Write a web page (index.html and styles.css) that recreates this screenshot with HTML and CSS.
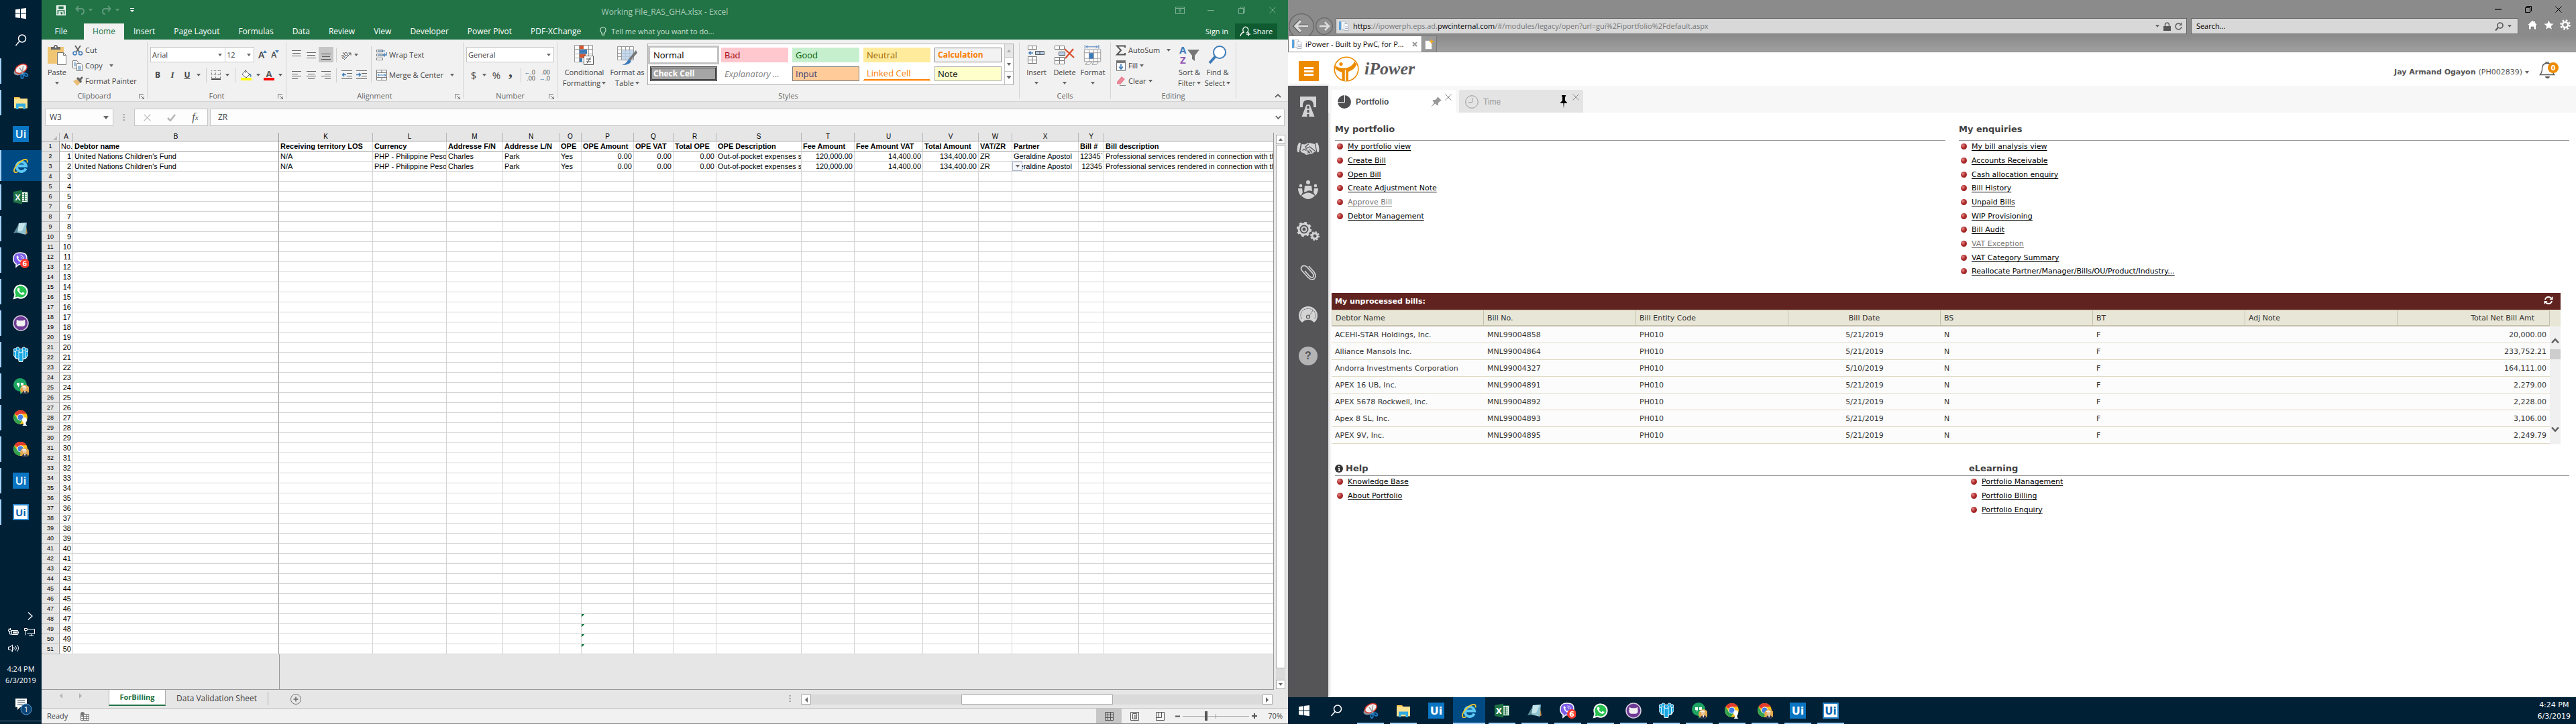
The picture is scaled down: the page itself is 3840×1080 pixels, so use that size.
FILE: index.html
```html
<!DOCTYPE html>
<html lang="en">
<head>
<meta charset="utf-8">
<title>Working File_RAS_GHA.xlsx - Excel | iPower</title>
<link rel="stylesheet" href="styles.css">
</head>
<body>
<svg class="symbols" aria-hidden="true">
  <symbol id="i-win" viewBox="0 0 24 24"><path fill="#fff" d="M4 6.2l7-1v6.4H4zM12 5l8-1.1v7.7h-8zM4 12.5h7v6.4l-7-1zM12 12.5h8v7.7L12 19z"/></symbol>
  <symbol id="i-search" viewBox="0 0 24 24"><g fill="none" stroke="#fff" stroke-width="1.5"><circle cx="14" cy="9.5" r="5.5"/><path d="M10 13.5L4.500 20"/></g></symbol>
  <symbol id="i-snip" viewBox="0 0 24 24"><ellipse cx="10.500" cy="12" rx="9.500" ry="5.500" fill="#8d97a0" transform="rotate(-25 10.500 12)"/><ellipse cx="12.500" cy="8.500" rx="9.500" ry="6" fill="#f4f1f0" stroke="#d8352c" stroke-width="1.600" transform="rotate(-28 12.500 8.500)"/><path d="M10 7l7 10M15.500 4.500L14 17" stroke="#9a9a9a" stroke-width="1.500"/><g fill="none" stroke="#1d7cc4" stroke-width="1.800"><ellipse cx="14" cy="20" rx="1.800" ry="3"/><ellipse cx="19.500" cy="17.500" rx="3" ry="1.900" transform="rotate(30 19.500 17.500)"/></g></symbol>
  <symbol id="i-folder" viewBox="0 0 24 24"><path fill="#f7c948" d="M2 4h8l2 2.500H2z"/><path fill="#fce391" d="M2 6h20v14.500H2z"/><path fill="#33aae0" d="M5 13.500h14V22h-3.500v-4h-7v4H5z"/></symbol>
  <symbol id="i-ui" viewBox="0 0 24 24"><path fill="#0a75c2" d="M0 0h24v24H0z"/><text x="12" y="18" text-anchor="middle" fill="#fff" font-size="16" font-weight="600">Ui</text></symbol>
  <symbol id="i-uiw" viewBox="0 0 24 24"><path fill="#fff" stroke="#2a86cd" stroke-width="2" d="M1 1h22v22H1z"/><text x="12" y="18" text-anchor="middle" fill="#0a66b0" font-size="15" font-weight="700">Ui</text></symbol>
  <symbol id="i-ie" viewBox="0 0 24 24"><path fill="none" stroke="#5cc8f5" stroke-width="4" d="M19.500 16.500A7.200 7.200 0 1 1 20 12.600H7"/><path fill="none" stroke="#f6c927" stroke-width="1.800" d="M21.500 7.500c1-3.600-.8-5.600-4.500-4.300C9 6 1 15.500 2 20.500c.5 2.200 3 2 5.500.8"/></symbol>
  <symbol id="i-excel" viewBox="0 0 24 24"><path fill="#fff" stroke="#1f7245" d="M12 4.500h10.500v15H12z"/><path stroke="#1f7245" d="M14 8h7M14 11h7M14 14h7M14 17h7M17.500 6v12"/><path fill="#1f7245" d="M1 4l13-2.500v21L1 20z"/><text x="7.500" y="16.500" text-anchor="middle" fill="#fff" font-size="12" font-weight="700">X</text></symbol>
  <symbol id="i-note" viewBox="0 0 24 24"><path fill="#b58b52" d="M19 4l3 15-3 2z"/><path fill="#8ec3cf" d="M9 4l12-1-2 18-12-3z"/><path fill="#c6e6ec" d="M9 4l10-.5-5 12-8 1z"/><path fill="#5b8a97" d="M9 5L1 19l6-1z"/></symbol>
  <symbol id="i-viber" viewBox="0 0 24 24"><path fill="#7d5ee8" stroke="#fff" stroke-width="1.500" d="M11 1C4 1 1 3.500 1 10c0 4 1 6.500 4 7.800V22l4-3.500C18 19 21 17 21 10S18 1 11 1z"/><path fill="#fff" d="M7 5c-2 1.200-1.500 3-.5 5 1.500 3 4 5 6.500 5.500 1 0 2-1 2-2l-2.500-1.700-1.500 1C9.500 12 8.500 10.500 8 9l1.200-1.300z"/><path fill="none" stroke="#fff" d="M11.500 5c3 .3 4.500 2 4.600 5M11.700 7.300c1.500.2 2.200 1 2.300 2.500"/><ellipse cx="18" cy="17" rx="7" ry="7" fill="#fb3b30"/><text x="18" y="21" text-anchor="middle" fill="#fff" font-size="11" font-weight="700">6</text></symbol>
  <symbol id="i-wa" viewBox="0 0 24 24"><path fill="#27c150" stroke="#fff" stroke-width="2" d="M2 22l1.500-5.500A9.600 9.600 0 1 1 7.500 20.500z"/><path fill="#fff" d="M8 6.500c-2 1.500-1.200 4 .5 6.300 2 2.700 4.500 4.200 6.800 4 1.500-.3 2.500-1.500 2.200-2.700l-2.700-1.400-1.300 1.500c-1.600-.5-3-1.900-3.800-3.500l1-1.300-1-2.700z"/></symbol>
  <symbol id="i-gh" viewBox="0 0 24 24"><circle cx="12" cy="12" r="11" fill="#6e3a96" stroke="#d8cfe0" stroke-width="1.500"/><path fill="#f1f1f1" d="M6 7l3 1.300h6L18 7c.6 1.500.5 2.300.2 3 1 3.500.3 6.500-3.200 6.800H9C5.500 16.500 4.800 13.500 5.800 10 5.500 9.300 5.400 8.500 6 7z"/></symbol>
  <symbol id="i-people" viewBox="0 0 24 24"><path fill="#e6f6fd" d="M1 7h22v6l-3 5-4 1-1 4H9l-1-4-4-1-3-5z"/><g fill="#17a8e3"><path d="M1.500 7.500H4V16l-2.500-4zM22.500 7.500H20V16l2.500-4zM5 7h3.500v11L5 16.500zM19 7h-3.500v11l3.500-1.500zM9.500 9h5v13h-5z"/></g><g fill="#17a8e3" stroke="#e6f6fd"><circle cx="3.500" cy="5" r="2.300"/><circle cx="20.500" cy="5" r="2.300"/><circle cx="7.500" cy="3.500" r="2.600"/><circle cx="16.500" cy="3.500" r="2.600"/><circle cx="12" cy="6" r="2.800"/></g></symbol>
  <symbol id="i-face" viewBox="0 0 14 14"><circle cx="7" cy="7" r="7" fill="#e3a94e"/><path fill="#26304a" d="M3 13c0-3 2-4 4.500-4S11 10 11.500 12A7 7 0 0 1 3 13z"/><circle cx="6.500" cy="5.500" r="2.800" fill="#eac9a8"/><path fill="#f5f0ea" d="M2 4c2-3.500 6-3.500 8 .2z"/><path fill="#fff" d="M6 9l1 4 1.500-4z"/></symbol>
  <symbol id="i-hang" viewBox="0 0 24 24"><path fill="#1da462" d="M11 0a10 10 0 0 0 0 20v4c6-3 10-8 10-14A10 10 0 0 0 11 0z"/><path fill="#fff" d="M6 7h4v4L8 14v-3H6zM12 7h4v4l-2 3v-3h-2z"/><use href="#i-face" x="11" y="10" width="14" height="14"/></symbol>
  <symbol id="i-chrome" viewBox="0 0 24 24"><circle cx="11.500" cy="11.500" r="10.500" fill="#fbc116"/><path fill="#e33b2e" d="M11.500 11.500L2.400 6.300A10.500 10.500 0 0 1 20.600 6.300h-9z"/><path fill="#31a350" d="M2.400 6.300a10.500 10.500 0 0 0 8 15.600l5-8.500-8.400.8z"/><circle cx="11.500" cy="11.500" r="5" fill="#fff"/><circle cx="11.500" cy="11.500" r="4" fill="#3f7fe8"/></symbol>
  <symbol id="i-chrome1" viewBox="0 0 24 24"><use href="#i-chrome" width="24" height="24"/><ellipse cx="17.500" cy="15.500" rx="3.500" ry="4" fill="#fff"/><path fill="#fff" d="M16 18h3.500v4l2 2h-7l1.500-2z"/></symbol>
  <symbol id="i-chrome2" viewBox="0 0 24 24"><use href="#i-chrome" width="24" height="24"/><use href="#i-face" x="11" y="10" width="14" height="14"/></symbol>
  <symbol id="i-launch" viewBox="0 0 8 8"><path fill="none" stroke="#777" d="M.5 7V.5H7M3 3l4 4M7.500 4v3.500H4"/></symbol>
  <symbol id="i-page" viewBox="0 0 16 16"><path fill="#5ba3dc" d="M1 1h3v13H1z"/><path fill="#f6f8fa" stroke="#b9c6d0" d="M4.500 1.500h6v11h-6z"/><path fill="#fff" stroke="#a9b6c0" d="M8.500 4.500h5l1.500 2v8H8.500z"/><path stroke="#aac" d="M10 9h4M10 11.500h4"/></symbol>
  <symbol id="i-x" viewBox="0 0 10 10"><path stroke="currentColor" fill="none" d="M.5.500l9 9M9.500.500l-9 9"/></symbol>
</svg>

<nav class="taskbar taskbar-side" aria-label="Taskbar, left screen">
  <button class="tb-sys" aria-label="Start"><svg class="ico"><use href="#i-win"/></svg></button>
  <button class="tb-sys" aria-label="Search"><svg class="ico"><use href="#i-search"/></svg></button>
  <div class="tb-apps">
    <button class="tb open" aria-label="Snipping Tool"><svg class="ico"><use href="#i-snip"/></svg></button>
    <button class="tb open" aria-label="File Explorer"><svg class="ico"><use href="#i-folder"/></svg></button>
    <button class="tb" aria-label="UiPath"><svg class="ico"><use href="#i-ui"/></svg></button>
    <button class="tb open current" aria-label="Internet Explorer"><svg class="ico"><use href="#i-ie"/></svg></button>
    <button class="tb open" aria-label="Excel"><svg class="ico"><use href="#i-excel"/></svg></button>
    <button class="tb open" aria-label="Notepad"><svg class="ico"><use href="#i-note"/></svg></button>
    <button class="tb open" aria-label="Viber"><svg class="ico"><use href="#i-viber"/></svg></button>
    <button class="tb open" aria-label="WhatsApp"><svg class="ico"><use href="#i-wa"/></svg></button>
    <button class="tb open" aria-label="GitHub Desktop"><svg class="ico"><use href="#i-gh"/></svg></button>
    <button class="tb open" aria-label="People"><svg class="ico"><use href="#i-people"/></svg></button>
    <button class="tb open" aria-label="Hangouts"><svg class="ico"><use href="#i-hang"/></svg></button>
    <button class="tb open" aria-label="Chrome"><svg class="ico"><use href="#i-chrome1"/></svg></button>
    <button class="tb open" aria-label="Chrome, profile"><svg class="ico"><use href="#i-chrome2"/></svg></button>
    <button class="tb open" aria-label="UiPath Studio"><svg class="ico"><use href="#i-ui"/></svg></button>
    <button class="tb open" aria-label="UiPath Robot"><svg class="ico"><use href="#i-uiw"/></svg></button>
  </div>
  <div class="tray">
    <button class="tray-more" aria-label="Show hidden icons"><svg width="8" height="14" viewBox="0 0 8 14"><path d="M1 1.500L7 7l-6 5.500" fill="none" stroke="#fff" stroke-width="1.300"/></svg></button>
    <div class="tray-icons">
      <svg width="16" height="14" viewBox="0 0 16 14"><path d="M.5 3.500h4v2h-4zM1.500 3.500V1M3.500 3.500V1M2.500 6v4H5" fill="none" stroke="#fff"/><path d="M5.500 4.500h9v6h-9z" stroke="#fff" fill="none"/><path d="M7 6h6v3H7zM15 6h1v3h-1z" fill="#fff"/></svg>
      <svg width="16" height="14" viewBox="0 0 16 14"><path d="M4.500 2.500h11v7h-11M7 12.500h7M10.500 9.500v3M.5 1.500h4v3h-4zM2.500 4.500v7" fill="none" stroke="#fff"/></svg>
      <svg width="17" height="14" viewBox="0 0 17 14"><path d="M.5 5v4h2.500L6.500 12V2L3 5zM8.500 5q1.500 2 0 4M11 3.500q3 3.500 0 7M13.500 2q4 5 0 10" fill="none" stroke="#fff"/></svg>
    </div>
    <div class="clock"><span>4:24 PM</span><span>6/3/2019</span></div>
    <button class="notify" aria-label="Notifications"><svg width="26" height="26" viewBox="0 0 26 26"><path d="M1 1h17v13H8l-4 4v-4H1z" fill="#fff"/><path d="M4 4.500h11M4 7.500h11M4 10.500h8" stroke="#002036"/><circle cx="17" cy="17" r="8" fill="#0d4577" stroke="#5d9bd3"/><text x="17" y="21" text-anchor="middle" fill="#fff" font-size="11">1</text></svg></button>
  </div>
</nav>

<main class="excel">
  <header class="x-title">
    <div class="qat">
      <button aria-label="Save"><svg width="14" height="15" viewBox="0 0 14 15"><path d="M.8.800h12.400v13.400H.8z M2.500 1v5.500h9V1 M4 14v-4.500h6V14" fill="none" stroke="#fff" stroke-width="1.500"/><path fill="#fff" d="M4.500 10.500h2V14h-2z"/></svg></button>
      <button class="dim" aria-label="Undo"><svg width="14" height="14" viewBox="0 0 14 14"><path d="M5 1L1.500 5 5 9M2 5h7q4 0 4 4t-4 4" fill="none" stroke="currentColor" stroke-width="2"/></svg></button>
      <i class="caret dim"></i>
      <button class="dim" aria-label="Redo"><svg width="14" height="14" viewBox="0 0 14 14"><path d="M9 1l3.500 4L9 9M12 5H5Q1 5 1 9t4 4" fill="none" stroke="currentColor" stroke-width="2"/></svg></button>
      <i class="caret dim"></i>
      <button aria-label="Customize Quick Access Toolbar"><svg width="6" height="6" viewBox="0 0 6 6"><path fill="#fff" d="M0 0h6v1H0zM0 3h6L3 6z"/></svg></button>
    </div>
    <h1>Working File_RAS_GHA.xlsx - Excel</h1>
    <div class="x-winbtns">
      <button aria-label="Ribbon Display Options"><svg width="14" height="11" viewBox="0 0 14 11"><path d="M.5.500h13v10H.5zM.5 2.500h13M7 9V4M5 6l2-2 2 2" fill="none" stroke="currentColor"/></svg></button>
      <button aria-label="Minimize"><svg width="10" height="11" viewBox="0 0 10 11"><path d="M0 5.500h10" stroke="currentColor"/></svg></button>
      <button aria-label="Restore"><svg width="10" height="11" viewBox="0 0 10 11"><path d="M.5 2.500h7v8h-7zM2.500 2V.5h7v8H8" fill="none" stroke="currentColor"/></svg></button>
      <button aria-label="Close"><svg width="10" height="10"><use href="#i-x"/></svg></button>
    </div>
  </header>
  <nav class="x-tabs" aria-label="Ribbon tabs">
    <button class="file">File</button><button class="on">Home</button><button>Insert</button><button>Page Layout</button><button>Formulas</button><button>Data</button><button>Review</button><button>View</button><button>Developer</button><button>Power Pivot</button><button>PDF-XChange</button>
    <button class="tell"><svg width="10" height="15" viewBox="0 0 10 15"><path d="M3 11V9Q1 7 1 4.500A4 4 0 0 1 9 4.500Q9 7 7 9v2zM3 13.500h4" fill="none" stroke="currentColor" stroke-width="1.200"/></svg>Tell me what you want to do...</button>
    <button class="signin">Sign in</button>
    <button class="share"><svg width="16" height="16" viewBox="0 0 16 16"><path d="M10 10a4 4.500 0 1 0-4-1Q2 10 1 15M13 9v6M10 12h6" fill="none" stroke="#fff" stroke-width="1.300"/></svg>Share</button>
  </nav>

  <section class="ribbon" aria-label="Home ribbon">
    <div class="grp g-clip">
      <div class="gbody">
        <button class="big"><svg width="30" height="30" viewBox="0 0 30 30"><path fill="#f0c674" d="M1 3h24v25H1z"/><path fill="#686868" d="M6 3h4a3 3 0 0 1 6 0h4v4H6z"/><circle cx="13" cy="3" r="1.200" fill="#fff"/><path fill="#fff" stroke="#777" d="M15.500 11.500h9l4 4v14h-13zM24.500 11.500v4h4"/></svg><span>Paste</span><i class="caret"></i></button>
        <div class="small-col">
          <button><svg width="16" height="16" viewBox="0 0 16 16"><path d="M4 1l6 9M12 1l-6 9" stroke="#666" stroke-width="2"/><g fill="none" stroke="#3d7ab8" stroke-width="1.500"><circle cx="3.500" cy="12.500" r="2.500"/><circle cx="12" cy="12.500" r="2.500"/></g></svg>Cut</button>
          <button><svg width="16" height="16" viewBox="0 0 16 16"><path d="M.5.500h6l2 2v9h-8z" fill="#fff" stroke="#777"/><path d="M6.500 4.500h6l2 2v9h-8z" fill="#fff" stroke="#777"/><path d="M2 4h3M2 6h3M2 8h3M8 9h5M8 11h5M8 13h5" stroke="#3d7ab8"/></svg>Copy<i class="caret far"></i></button>
          <button><svg width="16" height="16" viewBox="0 0 16 16"><path fill="#e9bd76" d="M1 8l6-3 5 5-5 5z"/><path fill="#666" d="M6 4l2-2 3 2 3-3 2 2-3 3 1 3-2 2z"/></svg>Format Painter</button>
        </div>
      </div>
      <div class="glabel"><span>Clipboard</span><svg width="8" height="8"><use href="#i-launch"/></svg></div>
    </div>

    <div class="grp g-font">
      <div class="gbody rows">
        <div class="row1">
          <label class="sel w-font"><select aria-label="Font"><option>Arial</option></select><i class="caret"></i></label><label class="sel w-size"><select aria-label="Font size"><option>12</option></select><i class="caret"></i></label>
          <button class="grow" aria-label="Increase font size"><b>A</b><i class="tri up"></i></button>
          <button class="grow less" aria-label="Decrease font size"><b>A</b><i class="tri"></i></button>
        </div>
        <div class="row2">
          <button class="k22"><b>B</b></button><button class="k22 it">I</button><button class="k22 un"><b>U</b></button><span class="k12"><i class="caret"></i></span><i class="sep m5"></i>
          <button class="k18" aria-label="Borders"><svg width="14" height="14" viewBox="0 0 14 14"><path d="M0 .5h14M0 6.500h14M.5 0v13M6.500 0v13M13.500 0v13" stroke="#777" stroke-dasharray="1 1"/><path d="M0 13h14" stroke="#444" stroke-width="2"/></svg></button><span class="k16"><i class="caret"></i></span><i class="sep m3"></i>
          <button class="k26" aria-label="Fill color"><svg width="16" height="16" viewBox="0 0 16 16"><path d="M7 1l6 6-5 5-6-5z" fill="#fff" stroke="#666"/><path d="M7 5V0" stroke="#666"/><path fill="#3d7ab8" d="M13 5q4 3 2 6-2-1-2-6"/><path fill="#ff0" d="M0 12h16v4H0z"/></svg></button><span class="k10"><i class="caret"></i></span>
          <button class="k22" aria-label="Font color"><svg width="16" height="16" viewBox="0 0 16 16"><text x="8" y="11" text-anchor="middle" font-size="13" font-weight="700" fill="#555">A</text><path fill="#f00" d="M0 12h16v4H0z"/></svg></button><span class="k12"><i class="caret"></i></span>
        </div>
      </div>
      <div class="glabel"><span>Font</span><svg width="8" height="8"><use href="#i-launch"/></svg></div>
    </div>

    <div class="grp g-align">
      <div class="gbody">
        <div class="rows">
          <div class="row1">
            <button class="k22" aria-label="Top align"><svg width="14" height="14" viewBox="0 0 14 14"><path d="M0 .5h14M1 4.500h12M0 8.500h14" stroke="#666"/></svg></button><button class="k22" aria-label="Middle align"><svg width="14" height="14" viewBox="0 0 14 14"><path d="M0 3.500h14M1 7.500h12M0 11.500h14" stroke="#666"/></svg></button><button class="k22 sel-on" aria-label="Bottom align"><svg width="14" height="14" viewBox="0 0 14 14"><path d="M0 5.500h14M1 9.500h12M0 13.500h14" stroke="#555"/></svg></button><i class="sep m4"></i>
            <button class="k20" aria-label="Orientation"><svg width="16" height="16" viewBox="0 0 16 16"><text x="0" y="11" font-size="10" fill="#555" transform="rotate(-40 6 9)">ab</text><path d="M5 15L15 5M11.500 5H15v3.500" fill="none" stroke="#555"/></svg></button><span class="k10"><i class="caret"></i></span>
          </div>
          <div class="row2">
            <button class="k22" aria-label="Align left"><svg width="14" height="12" viewBox="0 0 14 12"><path d="M0 .5h14M0 4.500h9M0 7.500h14M0 11.500h9" stroke="#666"/></svg></button><button class="k22" aria-label="Center"><svg width="14" height="12" viewBox="0 0 14 12"><path d="M0 .5h14M2 4.500h10M0 7.500h14M2 11.500h10" stroke="#666"/></svg></button><button class="k22" aria-label="Align right"><svg width="14" height="12" viewBox="0 0 14 12"><path d="M0 .5h14M5 4.500h9M0 7.500h14M5 11.500h9" stroke="#666"/></svg></button><i class="sep m4"></i>
            <button class="k22" aria-label="Decrease indent"><svg width="16" height="14" viewBox="0 0 16 14"><path d="M0 .5h16M8 4.500h8M8 8.500h8M0 12.500h16" stroke="#666"/><path d="M7 6.500H2M4 4L1.500 6.500 4 9" fill="none" stroke="#3d7ab8" stroke-width="1.500"/></svg></button><button class="k22" aria-label="Increase indent"><svg width="16" height="14" viewBox="0 0 16 14"><path d="M0 .5h16M8 4.500h8M8 8.500h8M0 12.500h16" stroke="#666"/><path d="M0 6.500h6M4 4l2.500 2.500L4 9" fill="none" stroke="#3d7ab8" stroke-width="1.500"/></svg></button>
          </div>
        </div>
        <i class="sep tall"></i>
        <div class="rows wide">
          <div class="row1"><button class="txt"><svg width="16" height="16" viewBox="0 0 16 16"><path d="M.5.500h9v3h-9zM.5 6.500h9v3h-9zM.5 12.500h9v3h-9z" fill="#fff" stroke="#777"/><path d="M2 2h11M2 8h6" stroke="#3d7ab8"/><path d="M15 4v4h-4M12.500 5.500L10.500 8l2 2.500" fill="none" stroke="#3d7ab8" stroke-width="1.300"/></svg>Wrap Text</button></div>
          <div class="row2"><button class="txt"><svg width="16" height="16" viewBox="0 0 16 16"><path d="M.5.500h15v15H.5zM.5 4.500h15M.5 11.500h15M8 1v3M8 12v3" fill="#fff" stroke="#777"/><path d="M2 8h12M4 6L2 8l2 2M12 6l2 2-2 2" fill="none" stroke="#3d7ab8"/></svg>Merge &amp; Center<i class="caret far"></i></button></div>
        </div>
      </div>
      <div class="glabel"><span>Alignment</span><svg width="8" height="8"><use href="#i-launch"/></svg></div>
    </div>

    <div class="grp g-num">
      <div class="gbody rows">
        <div class="row1"><label class="sel w-num"><select aria-label="Number format"><option>General</option></select><i class="caret"></i></label></div>
        <div class="row2"><button class="k22 sym">$</button><span class="k10"><i class="caret"></i></span><button class="k26 sym">%</button><button class="k16 comma">,</button><i class="sep m6"></i>
          <button class="k22 dec"><span><em>←</em>.0</span><span>.00</span></button><button class="k22 dec"><span>.00</span><span><em>→</em>.0</span></button></div>
      </div>
      <div class="glabel"><span>Number</span><svg width="8" height="8"><use href="#i-launch"/></svg></div>
    </div>

    <div class="grp g-style">
      <div class="gbody">
        <button class="big w68"><svg width="30" height="30" viewBox="0 0 30 30"><path fill="#fff" stroke="#999" d="M.5.500h27v25H.5zM.5 6.500h27M.5 13.500h27M.5 19.500h27M7.500.500v25M21.500.500v25"/><path fill="#d6572f" d="M8 1h6v5H8zM8 14h9v5H8z"/><path fill="#3d7ab8" d="M8 7h11v6H8zM8 20h4v5H8z"/><path fill="#fff" stroke="#555" d="M14.500 16.500h14v13h-14z"/><path d="M18 21h7M18 25h7M24 18.500l-5 9" stroke="#444"/></svg><span>Conditional</span><span>Formatting<i class="caret"></i></span></button>
        <button class="big w54"><svg width="30" height="30" viewBox="0 0 30 30"><path fill="#fff" stroke="#999" d="M.5 2.500h24v20H.5zM.5 7.500h24M.5 12.500h24M.5 17.500h24M6.500 2.500v20M12.500 2.500v20M18.500 2.500v20"/><path fill="#b8cfe8" d="M7 8h17v14H7z" opacity=".8"/><path fill="#777" d="M28 8l2 4-10 11-3-2z"/><path fill="#3d7ab8" d="M17 21l4 3q-2 6-14 6 7-2 10-9"/></svg><span>Format as</span><span>Table<i class="caret"></i></span></button>
        <div class="gallery">
          <div class="swatches">
            <button class="sw s-normal">Normal</button><button class="sw s-bad">Bad</button><button class="sw s-good">Good</button><button class="sw s-neutral">Neutral</button><button class="sw s-calc">Calculation</button>
            <button class="sw s-check">Check Cell</button><button class="sw s-expl">Explanatory ...</button><button class="sw s-input">Input</button><button class="sw s-link">Linked Cell</button><button class="sw s-note">Note</button>
          </div>
          <div class="gscroll"><button class="off" aria-label="Row up"><i class="tri up"></i></button><button aria-label="Row down"><i class="caret"></i></button><button class="more" aria-label="More styles"><i class="caret"></i></button></div>
        </div>
      </div>
      <div class="glabel"><span>Styles</span></div>
    </div>

    <div class="grp g-cells">
      <div class="gbody">
        <button class="big w42"><svg width="26" height="30" viewBox="0 0 26 30"><path fill="#fff" stroke="#777" d="M.5 1.500h13v5H.5zM7 1.500v5M.5 17.500h13v10H.5zM7 17.500v10M.5 22.500h13"/><path fill="#b8cfe8" stroke="#555" d="M11.500 9.500h13v5h-13zM18 9.500v5"/><path d="M8 12H2M4.500 9.500L2 12l2.500 2.500" fill="none" stroke="#3d7ab8" stroke-width="1.600"/></svg><span>Insert</span><i class="caret"></i></button>
        <button class="big w42"><svg width="30" height="30" viewBox="0 0 30 30"><path fill="#fff" stroke="#777" d="M.5 1.500h14v5H.5zM7.500 1.500v5M.5 18.500h14v10H.5zM7.500 18.500v10M.5 23.500h14"/><path fill="#b8cfe8" stroke="#555" d="M6.500 10.500h9v5h-9z"/><path d="M15 6l14 13M28 6L16 20" stroke="#d9502e" stroke-width="2.300"/></svg><span>Delete</span><i class="caret"></i></button>
        <button class="big w42"><svg width="28" height="32" viewBox="0 0 28 32"><path d="M1.500 0v6M23.500 0v6M3 3h19M6 1L3.500 3 6 5M19 1l2.500 2L19 5" fill="none" stroke="#3d7ab8"/><path fill="#fff" stroke="#999" d="M.5 7.500h26v19H.5zM.5 12.500h26M.5 21.500h26M8.500 7.500v19M15.500 7.500v19M21.500 7.500v19"/><path fill="#3d7ab8" d="M8 13h7v9H8z"/><path fill="#fff" stroke="#888" d="M2 31l4-4h7l-4 4zM13 31l3-4h7l-3 4z"/></svg><span>Format</span><i class="caret"></i></button>
      </div>
      <div class="glabel"><span>Cells</span></div>
    </div>

    <div class="grp g-edit">
      <div class="gbody">
        <div class="small-col w89">
          <button><svg width="16" height="16" viewBox="0 0 16 16"><path d="M14 4V1.500H2L8 8l-6 6.500h12V12" fill="none" stroke="#555" stroke-width="2"/></svg>AutoSum<i class="caret far"></i></button>
          <button><svg width="16" height="16" viewBox="0 0 16 16"><path fill="#fff" stroke="#777" d="M1.500.500h13v15h-13z"/><path fill="#777" d="M1 0h14v4H1z"/><path d="M8 5v7M5 9.500L8 13l3-3.500" fill="none" stroke="#3d7ab8" stroke-width="1.600"/></svg>Fill<i class="caret"></i></button>
          <button><svg width="16" height="16" viewBox="0 0 16 16"><path fill="#ea8697" d="M2 9l7-8 5 4-7 8-5-1z"/><path d="M6 14.500h9" stroke="#888"/></svg>Clear<i class="caret"></i></button>
        </div>
        <button class="big w42"><svg width="30" height="30" viewBox="0 0 30 30"><text x="0" y="13" font-size="15" font-weight="700" fill="#3d7ab8">A</text><text x="1" y="28" font-size="15" font-weight="700" fill="#9357b5">Z</text><path fill="#777" d="M12 7h18l-7 9v8l-4-3v-5z"/></svg><span>Sort &amp;</span><span>Filter<i class="caret"></i></span></button>
        <button class="big w42"><svg width="30" height="30" viewBox="0 0 30 30"><circle cx="18" cy="11" r="9" fill="#fff" stroke="#3d7ab8" stroke-width="2"/><path d="M11.500 17.500L3 27" stroke="#3d7ab8" stroke-width="4"/></svg><span>Find &amp;</span><span>Select<i class="caret"></i></span></button>
      </div>
      <div class="glabel"><span>Editing</span></div>
    </div>
    <button class="collapse" aria-label="Collapse the ribbon"><svg width="10" height="7" viewBox="0 0 10 7"><path d="M1 6l4-4 4 4" fill="none" stroke="#666" stroke-width="1.800"/></svg></button>
  </section>

  <div class="fbar">
    <label class="namebox"><input value="W3" aria-label="Name box"><i class="caret big-caret"></i></label>
    <i class="dots"></i>
    <div class="fbtns"><button aria-label="Cancel"><svg width="11" height="11"><use href="#i-x"/></svg></button><button aria-label="Enter"><svg width="13" height="11" viewBox="0 0 13 11"><path d="M1 6l4 4 7-9" fill="none" stroke="currentColor" stroke-width="2.500"/></svg></button><button class="fx">f<sub>x</sub></button></div>
    <label class="formula"><input value="ZR" aria-label="Formula bar"><svg width="9" height="6" viewBox="0 0 9 6"><path d="M1 1l3.500 4L8 1" fill="none" stroke="#666" stroke-width="1.800"/></svg></label>
  </div>

  <div class="sheet">
    <div class="canvas">
      <table class="grid">
        <colgroup><col class="c-rh"><col class="c-a"><col class="c-b"><col class="c-k"><col class="c-l"><col class="c-m"><col class="c-m"><col class="c-o"><col class="c-p"><col class="c-q"><col class="c-r"><col class="c-s"><col class="c-t"><col class="c-u"><col class="c-v"><col class="c-w"><col class="c-x"><col class="c-y"><col></colgroup>
        <thead><tr><th class="corner"><i></i></th><th>A</th><th>B</th><th>K</th><th>L</th><th>M</th><th>N</th><th>O</th><th>P</th><th>Q</th><th>R</th><th>S</th><th>T</th><th>U</th><th>V</th><th>W</th><th>X</th><th>Y</th><th></th></tr></thead>
        <tbody id="rows">
          <tr class="head"><th>1</th><td class="plain">No.</td><td>Debtor name</td><td>Receiving territory LOS</td><td>Currency</td><td>Addresse F/N</td><td>Addresse L/N</td><td>OPE</td><td>OPE Amount</td><td>OPE VAT</td><td>Total OPE</td><td>OPE Description</td><td>Fee Amount</td><td>Fee Amount VAT</td><td>Total Amount</td><td>VAT/ZR</td><td>Partner</td><td>Bill #</td><td>Bill description</td></tr>
          <tr><th>2</th><td class="n">1</td><td>United Nations Children's Fund</td><td>N/A</td><td>PHP - Philippine Peso</td><td>Charles</td><td>Park</td><td>Yes</td><td class="n">0.00</td><td class="n">0.00</td><td class="n">0.00</td><td>Out-of-pocket expenses s</td><td class="n">120,000.00</td><td class="n">14,400.00</td><td class="n">134,400.00</td><td>ZR</td><td>Geraldine Apostol</td><td>12345`</td><td>Professional services rendered in connection with the</td></tr>
          <tr><th>3</th><td class="n">2</td><td>United Nations Children's Fund</td><td>N/A</td><td>PHP - Philippine Peso</td><td>Charles</td><td>Park</td><td>Yes</td><td class="n">0.00</td><td class="n">0.00</td><td class="n">0.00</td><td>Out-of-pocket expenses s</td><td class="n">120,000.00</td><td class="n">14,400.00</td><td class="n">134,400.00</td><td>ZR</td><td class="drop"><button aria-label="Pick from list"><i class="caret"></i></button>Geraldine Apostol</td><td class="n">12345</td><td>Professional services rendered in connection with the</td></tr>
        </tbody>
      </table>
      <div class="blank"></div>
    </div>
    <div class="vscroll"><button aria-label="Scroll up"><i class="tri up"></i></button><span class="vthumb"></span><span class="vtrack"></span><button aria-label="Scroll down"><i class="caret"></i></button></div>
  </div>

  <div class="sheetbar">
    <div class="navarrows"><button aria-label="Previous sheet"><i class="arr left"></i></button><button aria-label="Next sheet"><i class="arr right"></i></button></div>
    <button class="stab on">ForBilling</button><button class="stab">Data Validation Sheet</button>
    <button class="addsheet" aria-label="New sheet"><svg width="16" height="16" viewBox="0 0 16 16"><circle cx="8" cy="8" r="7.500" fill="none" stroke="#777"/><path d="M8 4.500v7M4.500 8h7" stroke="#666" stroke-width="1.500"/></svg></button>
    <i class="dots split"></i>
    <div class="hscroll"><button aria-label="Scroll left"><i class="arr left"></i></button><span class="h1"></span><span class="hthumb"></span><span class="h2"></span><button aria-label="Scroll right"><i class="arr right"></i></button></div>
  </div>
  <footer class="status">
    <span class="ready">Ready</span>
    <svg width="13" height="13" viewBox="0 0 13 13"><path fill="#fff" stroke="#777" d="M.5 3.500h12v9H.5zM.5 6.500h12M.5 9.500h12M4.500 4v8M8.500 4v8"/><circle cx="3" cy="3" r="3" fill="#777"/></svg>
    <div class="views"><button class="on" aria-label="Normal"><svg width="13" height="13" viewBox="0 0 13 13"><path d="M.5.500h12v12H.5zM.5 4.500h12M.5 8.500h12M4.500.500v12M8.500.500v12" fill="none" stroke="#555"/></svg></button><button aria-label="Page Layout"><svg width="13" height="13" viewBox="0 0 13 13"><path d="M.5.500h12v12H.5zM3.500 2.500h6v8h-6zM5 5h3M5 7h3M5 9h3" fill="none" stroke="#555"/></svg></button><button aria-label="Page Break Preview"><svg width="13" height="13" viewBox="0 0 13 13"><path d="M.5.500h12v12H.5zM.5 8.500h8V.500M4.500.500v8" fill="none" stroke="#555"/></svg></button></div>
    <div class="zoom"><button aria-label="Zoom out"><svg width="7" height="7"><path d="M0 2.500h7v2H0z" fill="#555"/></svg></button><input type="range" min="0" max="100" value="34" aria-label="Zoom"><button aria-label="Zoom in"><svg width="8" height="8"><path d="M0 3h3V0h2v3h3v2H5v3H3V5H0z" fill="#555"/></svg></button><span>70%</span></div>
  </footer>
</main>

<section class="ie">
  <header class="ie-chrome">
    <div class="ie-winbtns"><button aria-label="Minimize"><svg width="10" height="10" viewBox="0 0 10 10"><path d="M0 5h10" stroke="#000" stroke-width="1.200"/></svg></button><button aria-label="Restore"><svg width="10" height="10" viewBox="0 0 10 10"><path d="M.5 2.500h7v7h-7zM2.500 2V.5h7v7H8" fill="none" stroke="#000"/></svg></button><button aria-label="Close"><svg width="10" height="10"><use href="#i-x"/></svg></button></div>
    <div class="ie-nav">
      <button class="back" aria-label="Back"><svg width="38" height="38" viewBox="0 0 38 38"><circle cx="19" cy="19" r="18.300" fill="#8f8f8f" stroke="#676767" stroke-width="1.300"/><path d="M29 19H10M18 10l-9 9 9 9" fill="none" stroke="#666" stroke-width="5"/><path d="M29 19H11M18 11l-8 8 8 8" fill="none" stroke="#dcdcdc" stroke-width="3.200"/></svg></button>
      <button class="fwd" aria-label="Forward"><svg width="26" height="26" viewBox="0 0 26 26"><circle cx="13" cy="13" r="12.300" fill="#8f8f8f" stroke="#676767" stroke-width="1.300"/><path d="M6 13h13M14 7l6 6-6 6" fill="none" stroke="#dcdcdc" stroke-width="2.500"/></svg></button>
      <div class="addr"><svg width="16" height="16"><use href="#i-page"/></svg><div class="url" role="textbox" aria-label="Address"><b>https</b>://ipowerph.eps.ad.<b>pwcinternal.com</b>/#/modules/legacy/open?url=gui%2Fiportfolio%2Fdefault.aspx</div><i class="caret"></i><svg width="11" height="13" viewBox="0 0 11 13"><path fill="#555" d="M0 6h11v7H0z"/><path d="M2.500 6V4a3 3 0 0 1 6 0v2" fill="none" stroke="#666" stroke-width="1.600"/></svg><svg width="11" height="12" viewBox="0 0 11 12"><path d="M9 3.500A4.500 4.500 0 1 0 10 7" fill="none" stroke="#666" stroke-width="1.700"/><path fill="#666" d="M10.500 0v5H6z"/></svg></div>
      <div class="search"><input type="text" placeholder="Search..." aria-label="Search"><svg width="13" height="13" viewBox="0 0 13 13"><circle cx="8" cy="5" r="4" fill="none" stroke="#555" stroke-width="1.600"/><path d="M5 8l-4 4.500" stroke="#555" stroke-width="2"/></svg><i class="caret"></i></div>
      <div class="ie-tools">
        <button aria-label="Home"><svg width="16" height="16" viewBox="0 0 16 16"><path fill="#fff" stroke="#666" stroke-width=".6" d="M8 1L.5 8.500h2V15H6v-4h4v4h3.500V8.500h2L12.500 5V2h-2v1.500z"/></svg></button>
        <button aria-label="Favorites"><svg width="17" height="16" viewBox="0 0 17 16"><path fill="#fff" stroke="#666" stroke-width=".6" d="M8.500.500l2.300 5.200 5.700.5-4.300 3.800 1.300 5.600-5-3-5 3 1.300-5.600L.5 6.200l5.700-.5z"/></svg></button>
        <button aria-label="Tools"><svg width="16" height="16" viewBox="0 0 16 16"><circle cx="8" cy="8" r="6.500" fill="none" stroke="#fff" stroke-width="2.600" stroke-dasharray="2.550 2.550"/><circle cx="8" cy="8" r="4" fill="none" stroke="#fff" stroke-width="2.600"/></svg></button>
      </div>
    </div>
    <div class="ie-tabs"><div class="ie-tab"><svg width="16" height="16"><use href="#i-page"/></svg><span>iPower - Built by PwC, for P...</span><button aria-label="Close tab"><svg width="8" height="8" viewBox="0 0 8 8"><path d="M1 1l6 6M7 1L1 7" stroke="#999" stroke-width="2"/></svg></button></div><button class="newtab" aria-label="New tab"><svg width="14" height="16" viewBox="0 0 14 16"><path fill="#fff" stroke="#aaa" d="M.5 2.500h10v13H.5z"/><path fill="#f3a71c" d="M10 0l1.200 2.800L14 4l-2.800 1.200L10 8 8.800 5.200 6 4l2.800-1.200z"/></svg></button></div>
  </header>

  <header class="ip-head">
    <button class="burger" aria-label="Menu"><i></i><i></i><i></i></button>
    <a class="brand" href="#"><svg width="38" height="38" viewBox="0 0 38 38"><circle cx="19" cy="19" r="17.800" fill="#fff" stroke="#ed8b00" stroke-width="1.600"/><circle cx="11" cy="11.500" r="2.600" fill="#ed8b00"/><path fill="#ed8b00" d="M2.500 14q5 3.500 11.500 3.500h5Q28 15 31 8l3.500 4Q31 20 22 23v13.500l-5 .5-4.500-1V24Q6 22 2 18z"/><path d="M17.500 20v17" stroke="#fff" stroke-width="1.500"/></svg><span>iPower</span></a>
    <button class="user"><b>Jay Armand Ogayon</b> (PH002839)<i class="caret"></i></button>
    <button class="bell" aria-label="Notifications"><svg width="30" height="26" viewBox="0 0 30 26"><path d="M1.500 19.500h21Q19.500 16 19.500 10T14 2.500h-4Q4.500 4 4.500 10T1.500 19.500zM10 2.500V.8h4v1.700" fill="none" stroke="#555" stroke-width="1.300"/><path fill="#555" d="M9 22h7q-.5 3-3.500 3T9 22z"/><circle cx="21" cy="9" r="8" fill="#ed8b00"/><text x="21" y="13" text-anchor="middle" fill="#fff" font-size="10" font-weight="700">0</text></svg></button>
  </header>

  <div class="ip-body">
    <nav class="side" aria-label="Modules">
      <button aria-label="Engagements"><svg width="24" height="30" viewBox="0 0 24 30"><path fill="#d3d3d4" d="M0 0h24v16h-4q1-11-8-11T4 16H0z"/><path fill="#d3d3d4" d="M9.500 12h5L21.500 30h-19z"/><path d="M12 14v16" stroke="#555457" stroke-width="3" stroke-dasharray="4 2"/></svg></button>
      <button aria-label="Clients"><svg width="34" height="19" viewBox="0 0 34 19"><path fill="#d3d3d4" d="M3.500.500l2.500 1-2.500 14L1 14.500Q-.5 6 3.500.500zM30.500.500l-2.500 1 2.500 14 2.500-1q1.500-8.500-2.500-14z"/><path fill="#d3d3d4" d="M7.500 3l4.500.5 5-2.500 4 .5 6 1.500 2 10-3 2-2.500 2-3 .5-2.500.8-4 .7-3-2.500-3.500-1-2-2.500z"/><path fill="none" stroke="#555457" stroke-width="1.200" d="M18 2.500l-5 4.500 1 2.500 5.500-2.500 7.500 6M8.500 12.500l2.500-2 2 1.500 2-.5 1 2 2 .5-1.500 3M19 11l4 4.500M17 13l3 3.500"/></svg></button>
      <button aria-label="People"><svg width="30" height="28" viewBox="0 0 30 28"><g fill="#d3d3d4"><circle cx="15" cy="3" r="3"/><circle cx="4" cy="8" r="2.300"/><circle cx="26" cy="8" r="2.300"/><path d="M10 8h10l1 8q-6-2-9 1l-3 .500zM0 12h6l1 6-3 5Q0 18 0 12zM30 12h-6l-1 6 3 5q4-5 4-11z"/><path d="M5 23q10-9 20 0-10 10-20 0z"/></g></svg></button>
      <button aria-label="Settings"><svg width="34" height="28" viewBox="0 0 34 28"><g fill="none" stroke="#d3d3d4"><circle cx="11" cy="11" r="8" stroke-width="3"/><circle cx="11" cy="11" r="10" stroke-width="2.500" stroke-dasharray="3.900 3.950"/><circle cx="11" cy="11" r="3.500" stroke-width="2"/><circle cx="27" cy="21" r="4" stroke-width="3"/><circle cx="27" cy="21" r="6" stroke-width="2" stroke-dasharray="2.400 2.300"/></g></svg></button>
      <button aria-label="Attachments"><svg width="24" height="24" viewBox="0 0 24 24"><path d="M13 2l8 9q4 6 0 10-4 3-9-2L3 9Q0 5 3 2.500t7 .5l9 10q2 3 .5 5t-5-.5L7 9" fill="none" stroke="#d3d3d4" stroke-width="1.700"/></svg></button>
      <button aria-label="Dashboard"><svg width="28" height="25" viewBox="0 0 28 25"><path fill="#d3d3d4" d="M5 24Q0 20 0 14a14 14 0 0 1 28 0q0 6-5 10l-4-3q-5-2-10 0z"/><path d="M4.500 19Q2 15 3.500 10 6 3.500 14 3.500T24.500 10q1.500 5-1 9M15 15l6-9" fill="none" stroke="#555457" stroke-width=".8" stroke-dasharray="3 1"/><circle cx="14" cy="15.500" r="2.500" fill="none" stroke="#555457" stroke-width="1.200"/></svg></button>
      <button class="q" aria-label="Help">?</button>
    </nav>
    <div class="content">
      <div class="ip-tabs">
        <div class="ip-tab on"><svg width="20" height="20" viewBox="0 0 20 20"><circle cx="10" cy="10" r="10" fill="#4f4e51"/><path d="M10.500 0v10.500H0" fill="none" stroke="#fff"/></svg><a href="#">Portfolio</a><button class="pin" aria-label="Pin"><svg width="16" height="16" viewBox="0 0 16 16"><path fill="#999" d="M10 0l6 6-2 .5-3 3v3l-1.500 1L6.500 10.500 0 16l5-7L2.500 6.500 3.500 5h3l3-3z"/></svg></button><button class="close" aria-label="Close Portfolio"><svg width="10" height="10"><use href="#i-x"/></svg></button></div>
        <div class="ip-tab"><svg width="20" height="20" viewBox="0 0 20 20"><circle cx="10" cy="10" r="9.300" fill="none" stroke="#999"/><path d="M10.500 4v6.500H5" fill="none" stroke="#999"/></svg><a href="#">Time</a><button class="pin" aria-label="Unpin"><svg width="16" height="20" viewBox="0 0 16 20"><path d="M5 0h6v1.500l-1 1V8l3 3v1H8.700L8 20l-.7-8H3v-1l3-3V2.500l-1-1z"/></svg></button><button class="close" aria-label="Close Time"><svg width="10" height="10"><use href="#i-x"/></svg></button></div>
      </div>
      <div class="links">
        <section><h2>My portfolio</h2><ul><li><a href="#">My portfolio view</a></li><li><a href="#">Create Bill</a></li><li><a href="#">Open Bill</a></li><li><a href="#">Create Adjustment Note</a></li><li><a href="#" class="off">Approve Bill</a></li><li><a href="#">Debtor Management</a></li></ul></section>
        <section><h2>My enquiries</h2><ul><li><a href="#">My bill analysis view</a></li><li><a href="#">Accounts Receivable</a></li><li><a href="#">Cash allocation enquiry</a></li><li><a href="#">Bill History</a></li><li><a href="#">Unpaid Bills</a></li><li><a href="#">WIP Provisioning</a></li><li><a href="#">Bill Audit</a></li><li><a href="#" class="off">VAT Exception</a></li><li><a href="#">VAT Category Summary</a></li><li><a href="#">Reallocate Partner/Manager/Bills/OU/Product/Industry...</a></li></ul></section>
      </div>
      <section class="bills">
        <div class="bills-bar"><h3>My unprocessed bills:</h3><button aria-label="Refresh"><svg width="14" height="14" viewBox="0 0 14 14"><path d="M2 6Q3 2 7 2q3 0 4.500 2.500M12 8q-1 4-5 4-3 0-4.500-2.500" fill="none" stroke="#fff" stroke-width="2"/><path fill="#fff" d="M13.500 1v5h-5zM.5 13V8h5z"/></svg></button></div>
        <div class="bills-scroll">
          <table>
            <thead><tr><th>Debtor Name</th><th>Bill No.</th><th>Bill Entity Code</th><th class="c">Bill Date</th><th>BS</th><th>BT</th><th>Adj Note</th><th class="r">Total Net Bill Amt</th></tr></thead>
            <tbody>
              <tr><td>ACEHI-STAR Holdings, Inc.</td><td>MNL99004858</td><td>PH010</td><td class="c">5/21/2019</td><td>N</td><td>F</td><td></td><td class="r">20,000.00</td></tr>
              <tr><td>Alliance Mansols Inc.</td><td>MNL99004864</td><td>PH010</td><td class="c">5/21/2019</td><td>N</td><td>F</td><td></td><td class="r">233,752.21</td></tr>
              <tr><td>Andorra Investments Corporation</td><td>MNL99004327</td><td>PH010</td><td class="c">5/10/2019</td><td>N</td><td>F</td><td></td><td class="r">164,111.00</td></tr>
              <tr><td>APEX 16 UB, Inc.</td><td>MNL99004891</td><td>PH010</td><td class="c">5/21/2019</td><td>N</td><td>F</td><td></td><td class="r">2,279.00</td></tr>
              <tr><td>APEX 5678 Rockwell, Inc.</td><td>MNL99004892</td><td>PH010</td><td class="c">5/21/2019</td><td>N</td><td>F</td><td></td><td class="r">2,228.00</td></tr>
              <tr><td>Apex 8 SL, Inc.</td><td>MNL99004893</td><td>PH010</td><td class="c">5/21/2019</td><td>N</td><td>F</td><td></td><td class="r">3,106.00</td></tr>
              <tr><td>APEX 9V, Inc.</td><td>MNL99004895</td><td>PH010</td><td class="c">5/21/2019</td><td>N</td><td>F</td><td></td><td class="r">2,249.79</td></tr>
            </tbody>
          </table>
          <div class="bscroll"><button aria-label="Scroll up"><svg width="12" height="9" viewBox="0 0 12 9"><path d="M1 7.500L6 2l5 5.500" fill="none" stroke="#606060" stroke-width="2.500"/></svg></button><span></span><button class="down" aria-label="Scroll down"><svg width="12" height="9" viewBox="0 0 12 9"><path d="M1 1.500L6 7l5-5.500" fill="none" stroke="#606060" stroke-width="2.500"/></svg></button></div>
        </div>
      </section>
      <div class="links lower">
        <section><h2><svg width="12" height="12" viewBox="0 0 12 12"><circle cx="6" cy="6" r="6" fill="#333"/><path d="M5 2h2v2H5zM4.500 5H7v4h1v1H4.500V9h1V6h-1z" fill="#fff"/></svg>Help</h2><ul><li><a href="#">Knowledge Base</a></li><li><a href="#">About Portfolio</a></li></ul></section>
        <section><h2>eLearning</h2><ul><li><a href="#">Portfolio Management</a></li><li><a href="#">Portfolio Billing</a></li><li><a href="#">Portfolio Enquiry</a></li></ul></section>
      </div>
    </div>
  </div>

  <nav class="taskbar taskbar-bottom" aria-label="Taskbar, right screen">
    <button class="tb-sys" aria-label="Start"><svg class="ico"><use href="#i-win"/></svg></button>
    <button class="tb-sys" aria-label="Search"><svg class="ico"><use href="#i-search"/></svg></button>
    <div class="tb-apps">
      <button class="tb open" aria-label="Snipping Tool"><svg class="ico"><use href="#i-snip"/></svg></button>
      <button class="tb open" aria-label="File Explorer"><svg class="ico"><use href="#i-folder"/></svg></button>
      <button class="tb" aria-label="UiPath"><svg class="ico"><use href="#i-ui"/></svg></button>
      <button class="tb open current" aria-label="Internet Explorer"><svg class="ico"><use href="#i-ie"/></svg></button>
      <button class="tb open" aria-label="Excel"><svg class="ico"><use href="#i-excel"/></svg></button>
      <button class="tb open" aria-label="Notepad"><svg class="ico"><use href="#i-note"/></svg></button>
      <button class="tb open" aria-label="Viber"><svg class="ico"><use href="#i-viber"/></svg></button>
      <button class="tb open" aria-label="WhatsApp"><svg class="ico"><use href="#i-wa"/></svg></button>
      <button class="tb open" aria-label="GitHub Desktop"><svg class="ico"><use href="#i-gh"/></svg></button>
      <button class="tb open" aria-label="People"><svg class="ico"><use href="#i-people"/></svg></button>
      <button class="tb open" aria-label="Hangouts"><svg class="ico"><use href="#i-hang"/></svg></button>
      <button class="tb open" aria-label="Chrome"><svg class="ico"><use href="#i-chrome1"/></svg></button>
      <button class="tb open" aria-label="Chrome, profile"><svg class="ico"><use href="#i-chrome2"/></svg></button>
      <button class="tb open" aria-label="UiPath Studio"><svg class="ico"><use href="#i-ui"/></svg></button>
      <button class="tb open" aria-label="UiPath Robot"><svg class="ico"><use href="#i-uiw"/></svg></button>
    </div>
    <div class="clock"><span>4:24 PM</span><span>6/3/2019</span></div>
  </nav>
</section>
<script src="grid.js"></script>
</body>
</html>
```

FILE: grid.js
```js
// Adds the numbered rows that hold no billing data yet.
const body = document.getElementById("rows");
const COLUMNS = 17;      // B to Z, after the number column
const OPE_AMOUNT = 6;    // zero-based place of "OPE Amount"
const FLAGGED_FROM = 48; // rows whose OPE amount carries an error flag

for (let row = 4; row <= 51; row++) {
  const tr = document.createElement("tr");
  const th = document.createElement("th");
  th.textContent = row;
  const no = document.createElement("td");
  no.className = "n";
  no.textContent = row - 1;
  tr.append(th, no);
  for (let c = 0; c < COLUMNS; c++) {
    const td = document.createElement("td");
    if (c === OPE_AMOUNT && row >= FLAGGED_FROM) td.className = "flag";
    tr.append(td);
  }
  body.append(tr);
}
```

FILE: styles.css
```css
* { box-sizing: border-box; }
body { margin: 0; display: flex; min-height: 100vh; font: 11px/16px "Open Sans", "Noto Sans", sans-serif; color: #444; background: #fff; }
button { background: none; border: 0; padding: 0; margin: 0; font: inherit; color: inherit; display: flex; align-items: center; justify-content: center; white-space: nowrap; }
input, select { font: inherit; color: inherit; border: 0; background: none; padding: 0; margin: 0; min-width: 0; appearance: none; outline: 0; }
h1, h2, h3, ul { margin: 0; padding: 0; font-weight: normal; list-style: none; }
svg { display: block; flex: none; }
.symbols { display: none; }
.caret { width: 0; height: 0; flex: none; border: 3px solid transparent; border-top: 4px solid #666; border-bottom: 0; }
.big-caret { border-width: 4px; border-top-width: 5px; border-bottom: 0; }
.tri { width: 0; height: 0; flex: none; border: 3px solid transparent; border-top: 4px solid #3d7ab8; border-bottom: 0; }
.tri.up { border-top: 0; border-bottom: 4px solid #3d7ab8; }
.arr { width: 0; height: 0; border: 4px solid transparent; }
.arr.left { border-right-color: #666; border-left: 0; }
.arr.right { border-left-color: #666; border-right: 0; }

/* Windows taskbars */
.taskbar { background: #002036; color: #fff; display: flex; }
.ico { width: 24px; height: 24px; }
.tb-apps { display: flex; gap: 1px; }
.tb.current { background: #004a83; }
.clock { display: flex; flex-direction: column; text-align: center; line-height: 17px; }
.taskbar-side { flex: 0 0 62px; min-width: 0; flex-direction: column; }
.taskbar-side .tb-sys { height: 40px; }
.taskbar-side .tb-apps { flex-direction: column; padding-top: 3px; }
.taskbar-side .tb { height: 46px; position: relative; }
.taskbar-side .open::before { content: ""; position: absolute; left: 0; top: 4px; bottom: 4px; width: 2px; background: #a6d3fb; }
.taskbar-side .current::before { top: 0; bottom: 0; }
.tray { margin-top: auto; border-bottom: 1px solid #5f7383; margin-bottom: 4px; }
.tray-more { width: 100%; height: 16px; padding-left: 28px; }
.tray-icons { display: grid; grid-template-columns: 17px 17px; gap: 10px 7px; padding: 9px 0 15px 12px; }
.taskbar-side .clock { padding-bottom: 16px; }
.notify { width: 100%; height: 36px; padding: 0 0 6px 8px; }
.taskbar-bottom { height: 40px; }
.taskbar-bottom .tb-sys { width: 48px; }
.taskbar-bottom .tb-apps { padding-left: 3px; }
.taskbar-bottom .tb { width: 48px; position: relative; }
.taskbar-bottom .open::before { content: ""; position: absolute; left: 4px; right: 4px; bottom: 0; height: 2px; background: #a6d3fb; }
.taskbar-bottom .current::before { left: 0; right: 0; }
.taskbar-bottom .clock { margin-left: auto; padding: 3px 8px 0 0; }

/* Excel window */
.excel { flex: 1858 1 0; min-width: 0; display: flex; flex-direction: column; background: #e6e6e6; border-bottom: 1px solid #8a8a8a; }
.x-title { height: 35px; background: #217346; color: #a9ccb8; display: grid; grid-template-columns: 1fr auto 1fr; align-items: center; }
.x-title h1 { font-size: 12px; }
.qat { display: flex; align-items: center; padding: 0 0 5px 22px; }
.qat .dim { color: #5f9a7b; border-top-color: #5f9a7b; }
.qat .dim:not(.caret) { margin-left: 14px; }
.qat .caret { margin-left: 6px; }
.qat button:last-child { margin-left: 16px; }
.x-winbtns { display: flex; justify-content: flex-end; padding: 0 0 5px; color: #7bb093; }
.x-winbtns button { width: 46px; }
.x-tabs { display: flex; height: 24px; background: #217346; color: #fff; font-size: 12px; }
.x-tabs button { padding: 0 14px; }
.x-tabs .file { width: 63px; padding: 0 5px 0 0; }
.x-tabs .on { background: #f1f1f1; color: #217346; width: 60px; padding: 0; }
.x-tabs .tell { color: #c6dece; gap: 7px; font-size: 11px; }
.x-tabs .signin { margin-left: auto; padding: 0 10px; font-size: 11px; }
.x-tabs .share { background: #0f5a31; width: 63px; padding: 0; gap: 4px; margin: 0 16px 1px 0; font-size: 11px; }

.ribbon { height: 93px; background: #f1f1f1; border-bottom: 1px solid #d2d2d2; display: flex; }
.grp { margin: 4px 0; border-right: 1px solid #d4d4d4; display: flex; flex-direction: column; flex: none; }
.gbody { height: 72px; display: flex; }
.glabel { height: 12px; line-height: 16px; display: flex; align-items: flex-start; color: #666; position: relative; }
.glabel span { flex: 1; text-align: center; }
.glabel svg { position: absolute; right: 4px; top: 5px; }
.g-clip { width: 158px; }
.g-font { width: 207px; }
.g-align { width: 264px; }
.g-num { width: 140px; }
.g-style { width: 689px; }
.g-cells { width: 136px; }
.g-edit { width: 187px; }
.big { flex-direction: column; justify-content: flex-start; padding-top: 4px; }
.big svg { height: 30px; margin-bottom: 3px; }
.big span { display: flex; align-items: center; gap: 2px; height: 16px; }
.big > .caret { margin-top: 6px; }
.g-clip .gbody { padding-left: 8px; gap: 8px; }
.small-col button { height: 23px; gap: 3px; }
.caret.far { margin-left: 7px; }
.rows { flex-direction: column; padding-left: 4px; }
.row1 { display: flex; align-items: center; height: 23px; margin-top: 7px; }
.row2 { display: flex; align-items: center; height: 24px; margin-top: 7px; }
.sel { display: flex; align-items: center; height: 23px; background: #fff; border: 1px solid #c6c6c6; padding: 0 4px 0 2px; }
.sel select { flex: 1; }
.sel + .sel { border-left: 0; }
.w-font { width: 112px; }
.w-size { width: 43px; }
.w-num { width: 131px; }
.grow { font-size: 14px; align-items: flex-start; margin-left: 6px; }
.grow b { font-weight: 600; }
.grow .tri { margin: 1px 0 0 -2px; }
.less { font-size: 12px; }
.k10 { width: 10px; } .k12 { width: 12px; } .k16 { width: 16px; } .k18 { width: 18px; } .k20 { width: 20px; } .k22 { width: 22px; } .k26 { width: 26px; }
.row2 span[class^="k"], .row1 span[class^="k"] { display: flex; justify-content: center; }
.row2 b, .it { font-size: 12px; }
.it { font: italic bold 13px "Liberation Serif", serif; }
.un { text-decoration: underline; }
.sep { width: 1px; height: 22px; background: #d0d0d0; flex: none; }
.m3 { margin: 0 3px; } .m4 { margin: 0 4px; } .m5 { margin: 0 5px; } .m6 { margin: 0 3px 0 7px; }
.sel-on { background: #c6c6c6; height: 23px; }
.tall { height: 54px; margin: 6px 3px 0; }
.txt { gap: 3px; }
.sym { font-size: 15px; }
.comma { font: bold 24px/10px "Liberation Serif", serif; padding-bottom: 12px; }
.dec { flex-direction: column; font-size: 9px; line-height: 9px; align-items: flex-end; padding-right: 4px; }
.dec em { font-style: normal; color: #3d7ab8; }
.g-style .gbody { padding-left: 6px; gap: 3px; }
.w68 { width: 68px; } .w54 { width: 54px; } .w42 { width: 42px; } .w89 { width: 89px; }
.gallery { display: flex; width: 546px; height: 62px; margin-top: 2px; border: 1px solid #ababab; background: #fff; }
.swatches { flex: 1; display: grid; grid-template-columns: repeat(5, 100px); grid-template-rows: 22px 22px; gap: 6px; padding: 5px 0 0 3px; }
.sw { justify-content: flex-start; padding-left: 4px; font-size: 13px; border: 1px solid transparent; }
.s-normal { color: #000; outline: 3px solid #c3c3c3; background: #fff; }
.s-bad { background: #ffc7ce; color: #9c0006; }
.s-good { background: #c6efce; color: #006100; }
.s-neutral { background: #ffeb9c; color: #9c6500; }
.s-calc { background: #f2f2f2; border-color: #7f7f7f; color: #fa7d00; font-size: 12px; font-weight: bold; }
.s-check { background: #a5a5a5; border: 3px double #3f3f3f; color: #fff; font-size: 12px; font-weight: bold; padding-left: 2px; }
.s-expl { color: #7f7f7f; font-style: italic; }
.s-input { background: #ffcc99; border-color: #7f7f7f; color: #3f3f76; }
.s-link { color: #fa7d00; border-bottom: 3px double #ff8001; }
.s-note { background: #ffffcc; border-color: #b2b2b2; color: #000; }
.gscroll { width: 13px; border-left: 1px solid #c6c6c6; display: grid; }
.gscroll button { border-bottom: 1px solid #c6c6c6; }
.gscroll .off { background: #e6e6e6; }
.gscroll .off .tri { border-bottom-color: #aaa; }
.gscroll .more { border: 0; position: relative; }
.gscroll .more::before { content: ""; position: absolute; top: 6px; width: 6px; height: 1px; background: #666; }
.g-cells .gbody { padding-left: 4px; }
.g-edit .gbody { padding-left: 7px; }
.collapse { margin: auto 10px 5px auto; }

.fbar { height: 46px; padding: 10px 5px 10px; display: flex; }
.namebox, .fbtns, .formula { display: flex; align-items: center; background: #fdfdfd; border: 1px solid #c6c6c6; height: 26px; font-size: 12px; }
.namebox { width: 102px; padding: 0 6px; }
.namebox input { flex: 1; width: 0; }
.dots { width: 3px; height: 11px; margin: 8px 14px 0; background: repeating-linear-gradient(#b0b0b0 0 2px, transparent 2px 4px); flex: none; }
.fbtns { width: 110px; color: #b5b5b5; }
.fbtns button { flex: 1; }
.fx { color: #555; font: italic 16px "Liberation Serif", serif; }
.fx sub { font-size: 11px; }
.formula { flex: 1; margin-left: 3px; padding: 0 4px 0 11px; }
.formula input { flex: 1; }

.sheet { flex: 1; display: flex; }
.canvas { flex: 1; min-width: 0; display: flex; flex-direction: column; border-right: 1px solid #999; border-bottom: 1px solid #999; margin-right: 3px; }
.grid { width: 100%; table-layout: fixed; border-spacing: 0; font: 11px/14px "Liberation Sans", Arial, sans-serif; color: #000; }
.c-rh { width: 27px; } .c-a { width: 20px; } .c-b { width: 307px; } .c-k { width: 140px; } .c-l { width: 110px; } .c-m { width: 84px; } .c-o { width: 33px; } .c-p { width: 78px; } .c-q { width: 59px; } .c-r { width: 64px; } .c-s { width: 127px; } .c-t { width: 79px; } .c-u { width: 102px; } .c-v { width: 83px; } .c-w { width: 50px; } .c-x { width: 99px; } .c-y { width: 38px; }
.grid th { font-weight: normal; font-size: 9px; padding: 0; background: #e6e6e6; border-right: 1px solid #999; border-bottom: 1px solid #bbb; }
.grid thead th { font-size: 10px; line-height: 12px; border-right-color: #b5b5b5; border-bottom-color: #999; }
.grid .corner { border-right-color: #b5b5b5; }
.corner i { display: block; width: 0; border: 3px solid transparent; border-right-color: #b8b8b8; border-bottom-color: #b8b8b8; margin: 3px 3px 0 auto; }
.grid td { background: #fff; border-right: 1px solid #d4d4d4; border-bottom: 1px solid #d4d4d4; padding: 0 0 0 2px; white-space: nowrap; overflow: hidden; }
.grid td:nth-child(3), .grid th:nth-child(3) { border-right-color: #999; }
.grid td:last-child, .grid thead th:last-child { border-right: 0; }
.grid .head td { font-weight: bold; border-bottom-color: #999; }
.grid .head .plain { font-weight: normal; }
.grid .n { text-align: right; padding-right: 2px; }
.grid .flag { background: linear-gradient(135deg, #107c41 3px, #fff 3px); }
.drop { position: relative; }
.drop button { position: absolute; left: 0; top: 0; width: 15px; height: 14px; background: #f4f6fa; border: 1px solid #a9b6cc; }
.blank { flex: 1; display: flex; }
.blank::before { content: ""; width: 354px; border-right: 1px solid #999; }
.vscroll { width: 14px; margin: 3px 4px 1px 0; display: flex; flex-direction: column; }
.vscroll button, .hscroll button { background: #fff; border: 1px solid #ababab; width: 14px; height: 14px; }
.vscroll .tri.up { border-bottom-color: #666; }
.vthumb { flex: 782; background: #fff; border: 1px solid #ababab; margin-top: 1px; }
.vtrack { flex: 17; background: #dadada; }

.sheetbar { height: 27px; display: flex; align-items: flex-start; font-size: 12px; }
.navarrows { width: 100px; height: 18px; display: flex; justify-content: center; gap: 25px; padding-right: 13px; opacity: .4; }
.stab { height: 24px; padding: 0 16px; font-size: 12px; }
.stab.on { width: 85px; padding: 0; background: #fff; color: #217346; font-weight: bold; font-size: 11px; border: 1px solid #ababab; border-top: 0; border-bottom: 2px solid #217346; }
.stab:not(.on) { border-right: 1px solid #ababab; height: 20px; margin-top: 3px; }
.addsheet { margin: 6px 0 0 33px; }
.split { margin: 8px 15px 0 auto; }
.hscroll { width: 703px; height: 15px; margin: 7px 23px 0 0; display: flex; }
.hscroll button { width: 15px; height: 15px; }
.h1 { flex: 225; background: #dadada; }
.hthumb { flex: 224; background: #fff; border: 1px solid #ababab; }
.h2 { flex: 224; background: #dadada; }
.status { height: 23px; background: #f1f1f1; border-top: 1px solid #c0c0c0; display: flex; align-items: center; padding-left: 8px; }
.ready { width: 50px; }
.views { margin-left: auto; display: flex; align-self: stretch; }
.views button { width: 38px; }
.views .on { background: #c6c6c6; }
.zoom { display: flex; align-items: center; margin: 0 8px 0 4px; gap: 4px; }
.zoom span { margin-left: 12px; }
.zoom input { width: 99px; height: 14px; background: linear-gradient(90deg, transparent 49px, #999 49px 50px, transparent 50px) 0 4px / 100% 7px no-repeat, linear-gradient(#aaa, #aaa) 0 7px / 100% 1px no-repeat; }
.zoom input::-webkit-slider-thumb { appearance: none; width: 4px; height: 14px; background: #555; }

/* Internet Explorer window */
.ie { flex: 1920 1 0; min-width: 0; display: flex; flex-direction: column; font-family: "DejaVu Sans", Verdana, sans-serif; }
.ie-chrome { height: 78px; background: linear-gradient(#8b8b8b 54px, #a0a0a0 77px); border-bottom: 1px solid #8b8b8b; font-family: "Open Sans", "Noto Sans", sans-serif; display: flex; flex-direction: column; overflow: hidden; }
.ie-winbtns { display: flex; justify-content: flex-end; height: 28px; padding-right: 4px; color: #000; }
.ie-winbtns button { width: 45px; }
.ie-nav { display: flex; height: 24px; align-items: center; padding-left: 1px; }
.ie-nav .fwd { margin: 0 4px 0 2px; }
.addr, .search { display: flex; align-items: center; height: 24px; background: #d8d8d8; border: 1px solid #666; }
.addr { flex: 1279; padding: 0 6px 0 3px; gap: 6px; }
.url { flex: 1; color: #777; white-space: nowrap; }
.url b { font-weight: normal; color: #000; }
.search { flex: 478; margin-left: 6px; padding: 0 9px 0 7px; gap: 6px; color: #000; }
.search input { flex: 1; }
.search input::placeholder { color: #000; opacity: 1; }
.ie-tools { display: flex; gap: 8px; width: 86px; padding-left: 13px; margin-top: -4px; }
.ie-tabs { display: flex; height: 24px; margin-top: 2px; z-index: 1; }
.ie-tab { width: 200px; background: #fff; border: 1px solid #777; border-width: 1px 1px 0; display: flex; align-items: center; padding: 0 6px 0 4px; gap: 5px; color: #111; }
.ie-tab span { flex: 1; white-space: nowrap; }
.newtab { width: 22px; border: 1px solid #777; border-width: 1px 1px 0 0; background: #999; }

.ip-head { height: 50px; display: flex; align-items: center; padding-left: 16px; color: #555; }
.burger { width: 30px; height: 30px; margin-top: 6px; background: #ed8b00; border-radius: 1px; flex-direction: column; gap: 2px; }
.burger i { width: 14px; height: 3px; background: #fff; }
.brand { display: flex; align-items: center; gap: 8px; margin-left: 22px; color: #5a595c; text-decoration: none; font: italic bold 26px "Liberation Serif", Georgia, serif; }
.user { margin: 10px 0 0 auto; }
.user b { margin-right: 4px; }
.user .caret { margin-left: 4px; }
.bell { margin: 3px 25px 0 15px; }
.ip-body { flex: 1; display: flex; }
.side { flex: 0 0 60px; background: #555457; box-shadow: 1px 0 5px #ccc; }
.side button { width: 100%; height: 62px; }
.side .q { width: 28px; height: 28px; margin: 17px auto; border-radius: 50%; background: #b4b4b5; color: #555457; font: bold 16px "Liberation Sans", sans-serif; }
.content { flex: 1; min-width: 0; }
.ip-tabs { height: 40px; background: #f7f7f7; padding: 6px 0 0 5px; display: flex; gap: 5px; font: 12px/16px "Liberation Sans", Arial, sans-serif; }
.ip-tab { width: 185px; height: 34px; border-radius: 3px 3px 0 0; background: #e4e4e4; display: flex; align-items: center; padding: 2px 6px 0 9px; color: #999; }
.ip-tab.on { background: #fff; color: #4f4e51; font-weight: bold; }
.ip-tab a { color: inherit; text-decoration: none; flex: 1; margin-left: 7px; }
.ip-tab .close { margin: 0 0 14px 5px; color: #888; }
.links { display: grid; grid-template-columns: 1fr 1fr; gap: 20px; padding: 15px 10px 0; }
.links h2 { font-size: 13px; font-weight: bold; line-height: 20px; padding-bottom: 6px; border-bottom: 1px solid #999; display: flex; align-items: center; gap: 4px; color: #404041; }
.links li { display: flex; align-items: center; gap: 7px; line-height: 17px; padding: 0 0 4px 3px; }
.links li:nth-child(3n) { padding-bottom: 3px; }
.links li::before { content: ""; width: 9px; height: 9px; border-radius: 50%; background: radial-gradient(circle at 35% 35%, #e08a8a, #b02a2a 45%, #7c1414); }
.links a { color: #000; text-underline-offset: 2px; }
.links a.off { color: #777; }
.links.lower { grid-template-columns: 945fr 895fr; gap: 0; padding-top: 27px; }
.links.lower h2 { padding: 0; }
.bills { margin: 20px 23px 0 5px; color: #333; }
.bills-bar { height: 25px; background: #602320; color: #fff; display: flex; align-items: center; justify-content: space-between; padding: 0 11px 0 5px; }
.bills-bar h3 { font-size: 11px; font-weight: bold; }
.bills-bar button { margin-bottom: 4px; }
.bills-scroll { display: flex; background: #f0f0f0; }
.bills table { flex: 1; width: 100%; min-width: 0; table-layout: fixed; border-spacing: 0; }
.bills th { height: 25px; padding: 0 5px; background: #e8e6d7; border-top: 2px solid #dddbc9; border-bottom: 2px solid #c4c0ab; border-right: 1px solid #c4c0ab; font-weight: normal; text-align: left; }
.bills th:first-child { border-left: 1px solid #c4c0ab; }
.bills td { height: 25px; padding: 2px 5px 0; background: #fcfcfc; border-bottom: 1px solid #dfd9c4; }
.bills .c { text-align: center; }
.bills .r { text-align: right; }
.bills th.r { padding-right: 22px; }
.bscroll { flex: 0 0 16px; border-top: 25px solid #e8e6d7; padding: 17px 0; display: flex; flex-direction: column; }
.bscroll button { width: 16px; }
.bscroll span { height: 15px; margin-top: 8px; background: #cdcdcd; }
.bscroll .down { margin-top: auto; }
```
